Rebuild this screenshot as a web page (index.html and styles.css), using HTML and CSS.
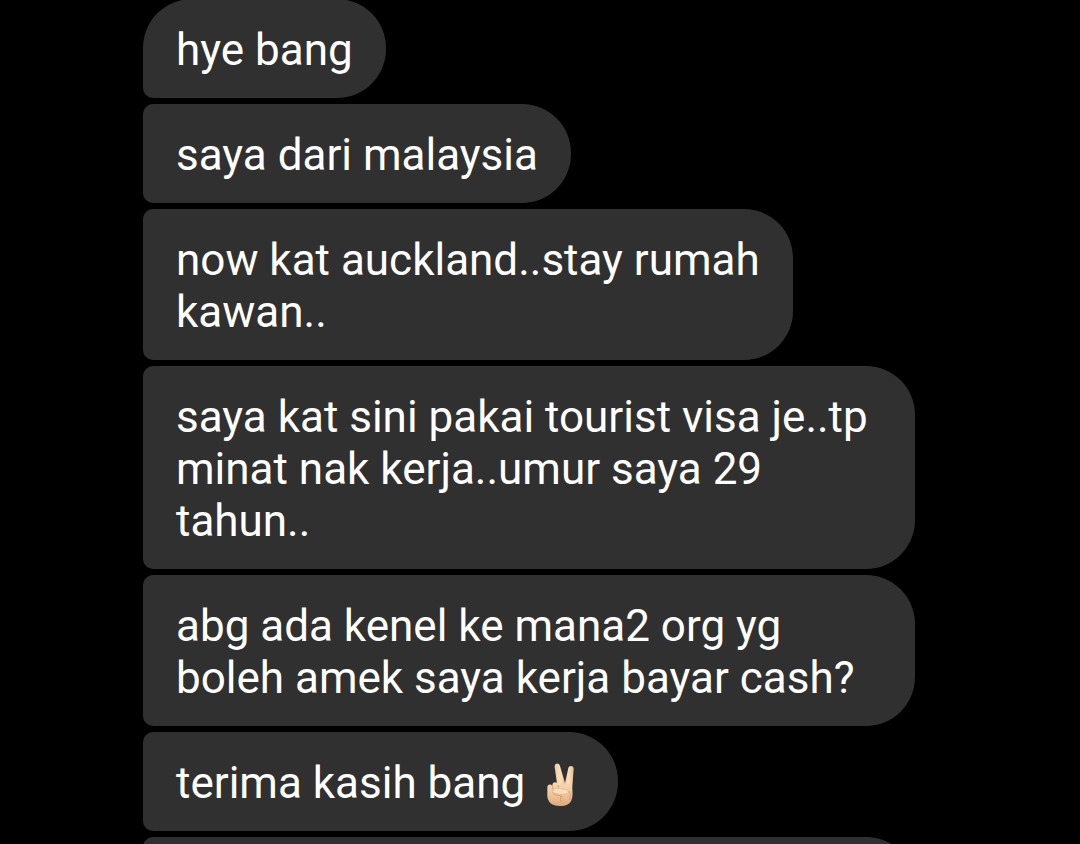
FILE: index.html
```
<!DOCTYPE html>
<html lang="ms">
<head>
<meta charset="utf-8">
<meta name="viewport" content="width=device-width, initial-scale=1">
<title>Chat</title>
<link rel="stylesheet" href="styles.css">
</head>
<body>
<main class="chat">
  <p class="bubble bubble-first">hye bang</p>
  <p class="bubble">saya dari malaysia</p>
  <p class="bubble">now kat auckland..stay rumah<br>kawan..</p>
  <p class="bubble bubble-full">saya kat sini pakai tourist visa je..tp<br>minat nak kerja..umur saya 29<br>tahun..</p>
  <p class="bubble bubble-full">abg ada kenel ke mana2 org yg<br>boleh amek saya kerja bayar cash?</p>
  <p class="bubble bubble-emoji">terima kasih bang
    <svg class="emoji" viewBox="15 24 150 150" role="img" aria-label="Victory hand">
      <defs>
        <linearGradient id="palm" x1="0" y1="0" x2="0" y2="1">
          <stop offset="0" stop-color="#f8d6b0"/>
          <stop offset=".55" stop-color="#efc49a"/>
          <stop offset="1" stop-color="#dda877"/>
        </linearGradient>
        <linearGradient id="finger" x1="0" y1="0" x2="1" y2="0">
          <stop offset="0" stop-color="#eec79f"/>
          <stop offset=".5" stop-color="#fbdfbf"/>
          <stop offset="1" stop-color="#e9bd92"/>
        </linearGradient>
      </defs>
      <path d="M101 118 L115 54 C117 45 132 46 131 57 L126 124Z" fill="url(#finger)"/>
      <path d="M82 108 L74 51 C72 39 87 36 90 48 L106 102 L104 122 L82 120Z" fill="url(#finger)"/>
      <path d="M52 112 C52 101 63 102 67 107 C66 95 82 93 85 105 L108 102 C118 99 127 106 127 119 C129 145 126 168 91 168 C63 168 52 153 52 137Z" fill="url(#palm)"/>
      <path d="M67 108 L70 121 M85 106 L86 114 M68 128 C73 138 88 135 97 139 M117 124 C123 130 121 143 119 149 M93 139 C90 145 91 151 93 154" fill="none" stroke="#c68f63" stroke-width="2" stroke-linecap="round" stroke-linejoin="round"/>
      <path d="M69 121 C72 111 87 116 98 117 C110 118 117 123 115 129 C105 136 81 132 72 129 C69 127 68 124 69 121Z" fill="#fbdcb9" stroke="#cf9b70" stroke-width="1"/>
    </svg></p>
  <p class="bubble bubble-full">&nbsp;</p>
</main>
</body>
</html>
```
FILE: styles.css
```
* {
  box-sizing: border-box;
}

body {
  margin: 0;
  height: 100vh;
  overflow: hidden;
  background: #000;
  color: #fff;
  font-family: Roboto, "Noto Sans", sans-serif;
  font-size: 44px;
  line-height: 52px;
}

.chat {
  display: flex;
  flex-direction: column;
  align-items: flex-start;
  gap: 6px;
  max-width: 915px;
  margin-top: -1px;
  padding-left: 143px;
}

.bubble {
  max-width: 100%;
  margin: 0;
  padding: 25px 33px 22px;
  border-radius: 10px 49px 49px 10px;
  background: #303030;
}

.bubble-first {
  border-top-left-radius: 49px;
}

.bubble-full {
  width: 100%;
}

.bubble-emoji {
  display: flex;
  align-items: center;
  gap: 10px;
}

.emoji {
  flex: none;
  width: 50px;
  height: 50px;
}
```
